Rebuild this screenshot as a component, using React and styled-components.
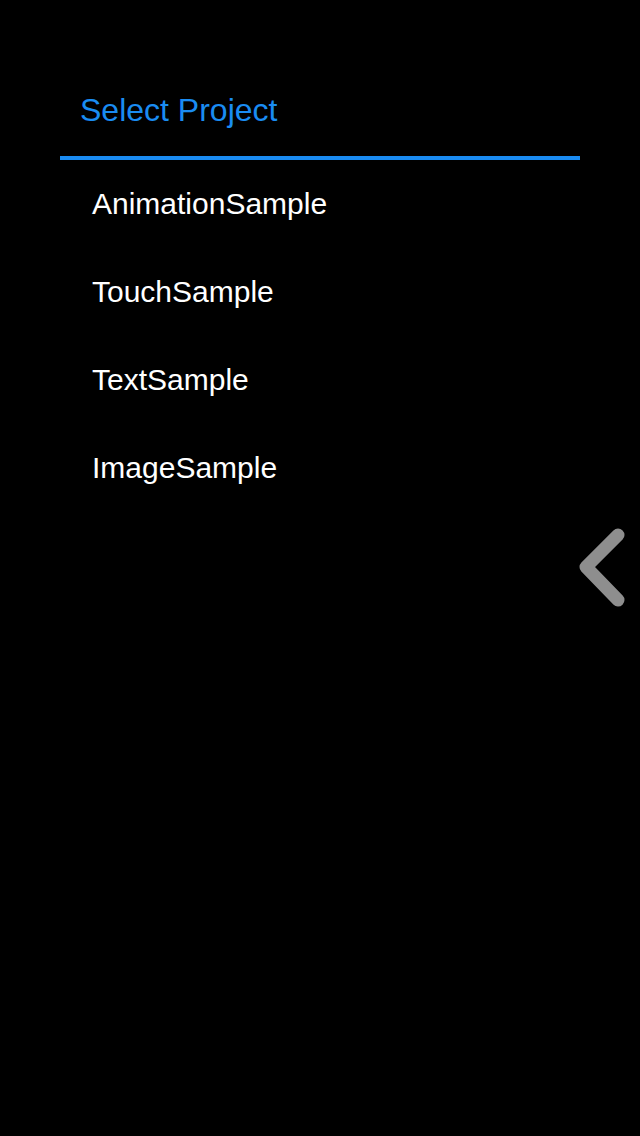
import React from "react";
import styled, { createGlobalStyle } from "styled-components";

const Global = createGlobalStyle`
  html, body { margin: 0; padding: 0; background: #000; }
  body { font-family: "Liberation Sans", Arial, Helvetica, sans-serif; }
`;

const Screen = styled.div`
  position: relative;
  width: 640px;
  height: 1136px;
  background: #000;
  overflow: hidden;
`;

const Panel = styled.div`
  margin: 0 60px;
  display: flex;
  flex-direction: column;
`;

const Header = styled.div`
  padding: 94px 20px 30px;
`;

const Title = styled.h1`
  margin: 0;
  font-size: 32px;
  line-height: 32px;
  font-weight: 400;
  color: #1a8cf2;
`;

const Divider = styled.div`
  height: 4px;
  background: #1a8cf2;
`;

const List = styled.ul`
  list-style: none;
  margin: 0;
  padding: 0;
`;

const Row = styled.li`
  height: 88px;
  display: flex;
  align-items: center;
  padding-left: 32px;
  font-size: 30px;
  color: #fff;
`;

const BackArrow = styled.div`
  position: absolute;
  top: 526px;
  right: 12px;
  width: 52px;
  height: 84px;
`;

const projects = ["AnimationSample", "TouchSample", "TextSample", "ImageSample"];

export default function App() {
  return (
    <Screen>
      <Global />
      <Panel>
        <Header>
          <Title>Select Project</Title>
        </Header>
        <Divider />
        <List>
          {projects.map((p) => (
            <Row key={p}>{p}</Row>
          ))}
        </List>
      </Panel>
      <BackArrow>
        <svg width="52" height="84" viewBox="0 0 52 84">
          <polyline
            points="42,9 10,41 42,74"
            fill="none"
            stroke="#8e8e8e"
            strokeWidth="13"
            strokeLinecap="round"
            strokeLinejoin="round"
          />
        </svg>
      </BackArrow>
    </Screen>
  );
}
